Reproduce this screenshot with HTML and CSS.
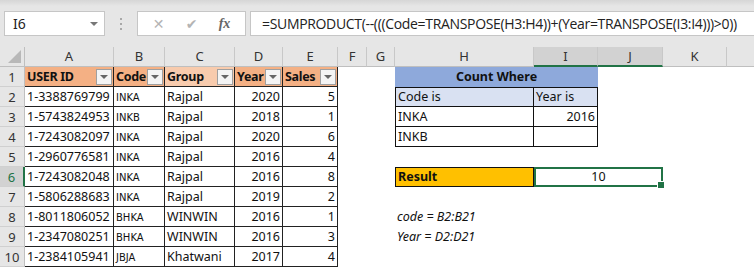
FILE: index.html
```html
<!DOCTYPE html>
<html lang="en">
<head>
    <meta charset="UTF-8">
    <title>Count Where - SUMPRODUCT</title>
    <link rel="stylesheet" href="styles.css">
</head>
<body>
    <!-- formula bar -->
    <div class="topbar">
        <div class="namebox">
            <span>I6</span>
            <span class="caret"></span>
        </div>
        <div class="grip"><i></i><i></i><i></i></div>
        <div class="btnbox">
            <span class="fbtn">&#x2715;</span>
            <span class="fbtn">&#x2714;</span>
            <span class="fx">fx</span>
        </div>
        <div class="formula">=SUMPRODUCT(--(((Code=TRANSPOSE(H3:H4))+(Year=TRANSPOSE(I3:I4)))&gt;0))</div>
    </div>

    <div class="sheet">
        <!-- column headings -->
        <div class="corner"><span class="tri"></span></div>
        <div class="colh">A</div>
        <div class="colh">B</div>
        <div class="colh">C</div>
        <div class="colh">D</div>
        <div class="colh">E</div>
        <div class="colh">F</div>
        <div class="colh">G</div>
        <div class="colh">H</div>
        <div class="colh sel">I</div>
        <div class="colh sel">J</div>
        <div class="colh">K</div>
        <div class="colh last"></div>

        <!-- row 1 -->
        <div class="rowh">1</div>
        <div class="cell hd orange"><span>USER ID</span><span class="filt"></span></div>
        <div class="cell hd orange"><span>Code</span><span class="filt"></span></div>
        <div class="cell hd light"><span>Group</span><span class="filt"></span></div>
        <div class="cell hd orange"><span>Year</span><span class="filt"></span></div>
        <div class="cell hd orange"><span>Sales</span><span class="filt"></span></div>
        <div class="blank span2"></div>
        <div class="cw span2">Count Where</div>
        <div class="blank span3"></div>

        <!-- row 2 -->
        <div class="rowh">2</div>
        <div class="cell">1-3388769799</div>
        <div class="cell code">INKA</div>
        <div class="cell">Rajpal</div>
        <div class="cell num">2020</div>
        <div class="cell num">5</div>
        <div class="blank span2"></div>
        <div class="tc first top lav">Code is</div>
        <div class="tc top lav">Year is</div>
        <div class="blank span3"></div>

        <!-- row 3 -->
        <div class="rowh">3</div>
        <div class="cell">1-5743824953</div>
        <div class="cell code">INKB</div>
        <div class="cell">Rajpal</div>
        <div class="cell num">2018</div>
        <div class="cell num">1</div>
        <div class="blank span2"></div>
        <div class="tc first">INKA</div>
        <div class="tc num">2016</div>
        <div class="blank span3"></div>

        <!-- row 4 -->
        <div class="rowh">4</div>
        <div class="cell">1-7243082097</div>
        <div class="cell code">INKA</div>
        <div class="cell">Rajpal</div>
        <div class="cell num">2020</div>
        <div class="cell num">6</div>
        <div class="blank span2"></div>
        <div class="tc first">INKB</div>
        <div class="tc"></div>
        <div class="blank span3"></div>

        <!-- row 5 -->
        <div class="rowh">5</div>
        <div class="cell">1-2960776581</div>
        <div class="cell code">INKA</div>
        <div class="cell">Rajpal</div>
        <div class="cell num">2016</div>
        <div class="cell num">4</div>
        <div class="blank span7"></div>

        <!-- row 6 -->
        <div class="rowh sel">6</div>
        <div class="cell">1-7243082048</div>
        <div class="cell code">INKA</div>
        <div class="cell">Rajpal</div>
        <div class="cell num">2016</div>
        <div class="cell num">8</div>
        <div class="blank span2"></div>
        <div class="result">Result</div>
        <div class="active span2">10<span class="handle"></span></div>
        <div class="blank span2"></div>

        <!-- row 7 -->
        <div class="rowh">7</div>
        <div class="cell">1-5806288683</div>
        <div class="cell code">INKA</div>
        <div class="cell">Rajpal</div>
        <div class="cell num">2019</div>
        <div class="cell num">2</div>
        <div class="blank span7"></div>

        <!-- row 8 -->
        <div class="rowh">8</div>
        <div class="cell">1-8011806052</div>
        <div class="cell code">BHKA</div>
        <div class="cell">WINWIN</div>
        <div class="cell num">2016</div>
        <div class="cell num">1</div>
        <div class="blank span2"></div>
        <div class="note">code = B2:B21</div>
        <div class="blank span4"></div>

        <!-- row 9 -->
        <div class="rowh">9</div>
        <div class="cell">1-2347080251</div>
        <div class="cell code">BHKA</div>
        <div class="cell">WINWIN</div>
        <div class="cell num">2016</div>
        <div class="cell num">3</div>
        <div class="blank span2"></div>
        <div class="note">Year = D2:D21</div>
        <div class="blank span4"></div>

        <!-- row 10 -->
        <div class="rowh">10</div>
        <div class="cell">1-2384105941</div>
        <div class="cell code">JBJA</div>
        <div class="cell">Khatwani</div>
        <div class="cell num">2017</div>
        <div class="cell num">4</div>
        <div class="blank span7"></div>
    </div>
</body>
</html>
```

FILE: styles.css
```css
body {
    margin: 0;
    width: 754px;
    height: 268px;
    overflow: hidden;
    background: #fff;
    font-family: 'Noto Sans', sans-serif;
    color: #111;
}

/* ---------- formula bar ---------- */

.topbar {
    height: 47px;
    box-sizing: border-box;
    padding: 11px 0 0 4px;
    display: flex;
    align-items: flex-start;
    background: linear-gradient(#d6d6d6 0, #e6e6e6 6px);
    overflow: hidden;
}

.namebox {
    width: 101px;
    height: 25px;
    box-sizing: border-box;
    border: 1px solid #c6c6c6;
    background: #fff;
    display: flex;
    align-items: center;
    justify-content: space-between;
    padding: 0 6px 0 8px;
    font-size: 14px;
    color: #222;
}

.caret {
    width: 0;
    height: 0;
    border-left: 4px solid transparent;
    border-right: 4px solid transparent;
    border-top: 4px solid #777;
}

.grip {
    width: 32px;
    height: 25px;
    display: flex;
    flex-direction: column;
    align-items: center;
    justify-content: center;
    gap: 3px;
}

.grip i {
    width: 2px;
    height: 2px;
    background: #a8a8a8;
}

.btnbox {
    width: 109px;
    height: 25px;
    box-sizing: border-box;
    border: 1px solid #c6c6c6;
    background: #fff;
    display: flex;
    align-items: center;
    justify-content: space-around;
    padding: 0 4px;
}

.fbtn {
    color: #b4b4b4;
    font-size: 14px;
    font-family: 'DejaVu Sans', sans-serif;
}

.fx {
    font-family: 'Liberation Serif', serif;
    font-style: italic;
    font-weight: bold;
    font-size: 14px;
    color: #666;
}

.formula {
    margin-left: 4px;
    flex: 1;
    height: 25px;
    box-sizing: border-box;
    border: 1px solid #c6c6c6;
    border-right: none;
    background: #fff;
    padding: 2px 0 0 11px;
    font-family: 'Open Sans', sans-serif;
    font-size: 14px;
    letter-spacing: -0.33px;
    color: #222;
    white-space: nowrap;
}

/* ---------- sheet ---------- */

.sheet {
    display: grid;
    grid-template-columns: 25px 89px 51px 70px 48px 55px 29px 28px 139px 64px 65px 64px 27px;
    grid-auto-rows: 20px;
    font-size: 12.5px;
}

.sheet > div {
    box-sizing: border-box;
}

.corner {
    background: #e6e6e6;
    border-right: 1px solid #bfbfbf;
    border-bottom: 1px solid #bfbfbf;
    position: relative;
}

.tri {
    position: absolute;
    right: 3px;
    bottom: 3px;
    width: 0;
    height: 0;
    border-left: 13px solid transparent;
    border-bottom: 13px solid #b8b8b8;
}

.colh {
    background: #e6e6e6;
    border-right: 1px solid #c8c8c8;
    border-bottom: 1px solid #bfbfbf;
    text-align: center;
    font-size: 13px;
    line-height: 19px;
    color: #333;
}

.colh.sel {
    background: #d2d2d2;
    border-bottom: 2px solid #217346;
}

.colh.last {
    border-right: none;
}

.rowh {
    background: #e6e6e6;
    border-right: 1px solid #bfbfbf;
    border-bottom: 1px solid #d0d0d0;
    text-align: center;
    font-size: 13px;
    line-height: 20px;
    color: #333;
}

.rowh.sel {
    background: #d2d2d2;
    color: #217346;
    border-right: 2px solid #217346;
}

.cell {
    border-right: 1px solid #222;
    border-bottom: 1px solid #222;
    padding: 0 2px;
    line-height: 19px;
    white-space: nowrap;
    overflow: hidden;
}

.num {
    text-align: right;
}

.code {
    font-family: 'DejaVu Sans', sans-serif;
    font-size: 10px;
    padding-top: 1px;
}

.hd {
    font-weight: bold;
    letter-spacing: -0.3px;
    display: flex;
    justify-content: space-between;
    align-items: center;
    padding-right: 1px;
}

.orange {
    background: #f4b084;
}

.light {
    background: #f8cbad;
}

.filt {
    flex: none;
    width: 16px;
    height: 16px;
    box-sizing: border-box;
    border: 1px solid #a0a0a0;
    background: #f4f4f4;
    display: flex;
    align-items: center;
    justify-content: center;
}

.filt::after {
    content: "";
    border-left: 4px solid transparent;
    border-right: 4px solid transparent;
    border-top: 4px solid #666;
}

.span2 { grid-column: span 2; }
.span3 { grid-column: span 3; }
.span4 { grid-column: span 4; }
.span7 { grid-column: span 7; }

.cw {
    background: #8ea9db;
    font-weight: bold;
    text-align: center;
    line-height: 20px;
}

.tc {
    border-right: 1px solid #111;
    border-bottom: 1px solid #111;
    padding: 0 2px;
    line-height: 19px;
}

.tc.first {
    border-left: 1px solid #111;
}

.tc.top {
    border-top: 1px solid #111;
    line-height: 18px;
}

.lav {
    background: #d9e1f2;
}

.result {
    background: #ffc000;
    border: 1px solid #111;
    font-weight: bold;
    padding: 0 2px;
    line-height: 18px;
}

.active {
    position: relative;
    border: 2px solid #217346;
    text-align: center;
    line-height: 16px;
}

.handle {
    position: absolute;
    right: -4px;
    bottom: -4px;
    width: 6px;
    height: 6px;
    background: #217346;
    border: 1px solid #fff;
}

.note {
    font-style: italic;
    padding: 0 2px;
    line-height: 20px;
    white-space: nowrap;
}
```
